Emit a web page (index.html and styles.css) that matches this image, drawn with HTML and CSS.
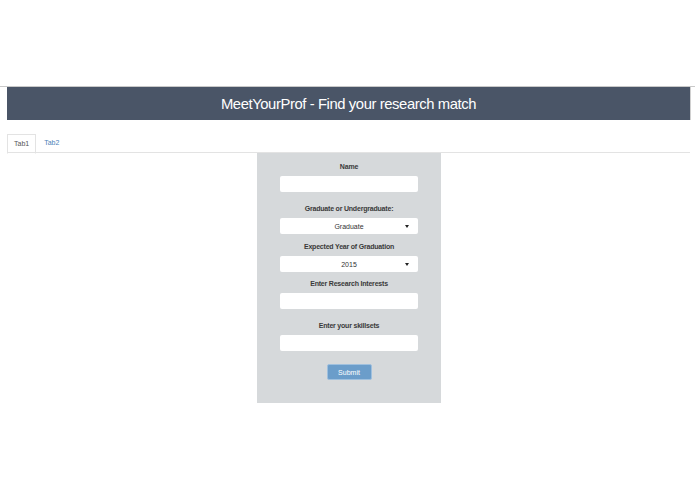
FILE: index.html
```html
<!DOCTYPE html>
<html>
<head>
<meta charset="utf-8">
<link rel="stylesheet" href="styles.css">
</head>
<body>
<div class="topspace"></div>
<div class="page">
  <div class="header"><h1 class="title">MeetYourProf - Find your research match</h1></div>
  <div class="tabs">
    <div class="tab active">Tab1</div>
    <div class="tab link">Tab2</div>
  </div>
  <div class="panel-wrap">
    <form class="panel">
      <div class="label">Name</div>
      <div class="input text"></div>
      <div class="label">Graduate or Undergraduate:</div>
      <div class="input select s1"><span class="val">Graduate</span><span class="caret"></span></div>
      <div class="label">Expected Year of Graduation</div>
      <div class="input select s2"><span class="val">2015</span><span class="caret"></span></div>
      <div class="label">Enter Research Interests</div>
      <div class="input text"></div>
      <div class="label">Enter your skillsets</div>
      <div class="input text last"></div>
      <div class="btn-row"><div class="btn">Submit</div></div>
    </form>
  </div>
</div>
</body>
</html>
```
FILE: styles.css
```css
html, body { margin: 0; padding: 0; background: #fff; }
body { font-family: "Liberation Sans", Arial, sans-serif; color: #333; }
.topspace { height: 86px; border-bottom: 1px solid #c9c9c9; }
.page { margin: 0 4px 0 7px; }
.header {
  height: 33px;
  background: #4a5567;
  display: flex;
  align-items: center;
  justify-content: center;
  border-right: 1px solid #d0d0d0;
}
.title {
  margin: 0;
  font-weight: normal;
  font-size: 14.8px;
  letter-spacing: -0.4px;
  color: #fff;
}
.tabs {
  margin-top: 14px;
  display: flex;
  border-bottom: 1px solid #e3e3e3;
  margin-right: 1px;
  height: 18px;
}
.tab {
  font-size: 7px;
  height: 18px;
  line-height: 18px;
  padding: 0 6px;
}
.tab.active {
  border: 1px solid #e3e3e3;
  border-bottom: 1px solid #fff;
  margin-bottom: -1px;
  height: 18px;
  color: #555;
}
.tab.link { color: #4d82b8; padding-left: 8px; }
.panel-wrap { display: flex; justify-content: center; }
.panel {
  width: 184px;
  margin: 0;
  background: #d6d9db;
  padding: 9px 0 23px;
  display: flex;
  flex-direction: column;
  align-items: center;
}
.label {
  font-size: 7px;
  font-weight: bold;
  letter-spacing: -0.2px;
  line-height: 10px;
  height: 10px;
  color: #3a3a3a;
  margin-bottom: 4px;
}
.input {
  width: 138px;
  height: 16px;
  background: #fff;
  border-radius: 2px;
  box-sizing: border-box;
  position: relative;
}
.input.text { margin-bottom: 12px; }
.input.s1 { margin-bottom: 8px; }
.input.s2 { margin-bottom: 7px; }
.input.last { margin-bottom: 13px; }
.select { display: flex; align-items: center; justify-content: center; }
.val { font-size: 7px; color: #333; }
.caret {
  position: absolute;
  right: 9px;
  top: 7px;
  width: 0; height: 0;
  border-left: 2.5px solid transparent;
  border-right: 2.5px solid transparent;
  border-top: 3px solid #222;
}
.btn-row { display: flex; justify-content: center; }
.btn {
  width: 45px;
  height: 16px;
  box-sizing: border-box;
  background: #6b9dca;
  border: 1px solid #9fc0de;
  border-radius: 2px;
  color: #fff;
  font-size: 7px;
  display: flex;
  align-items: center;
  justify-content: center;
}
```
